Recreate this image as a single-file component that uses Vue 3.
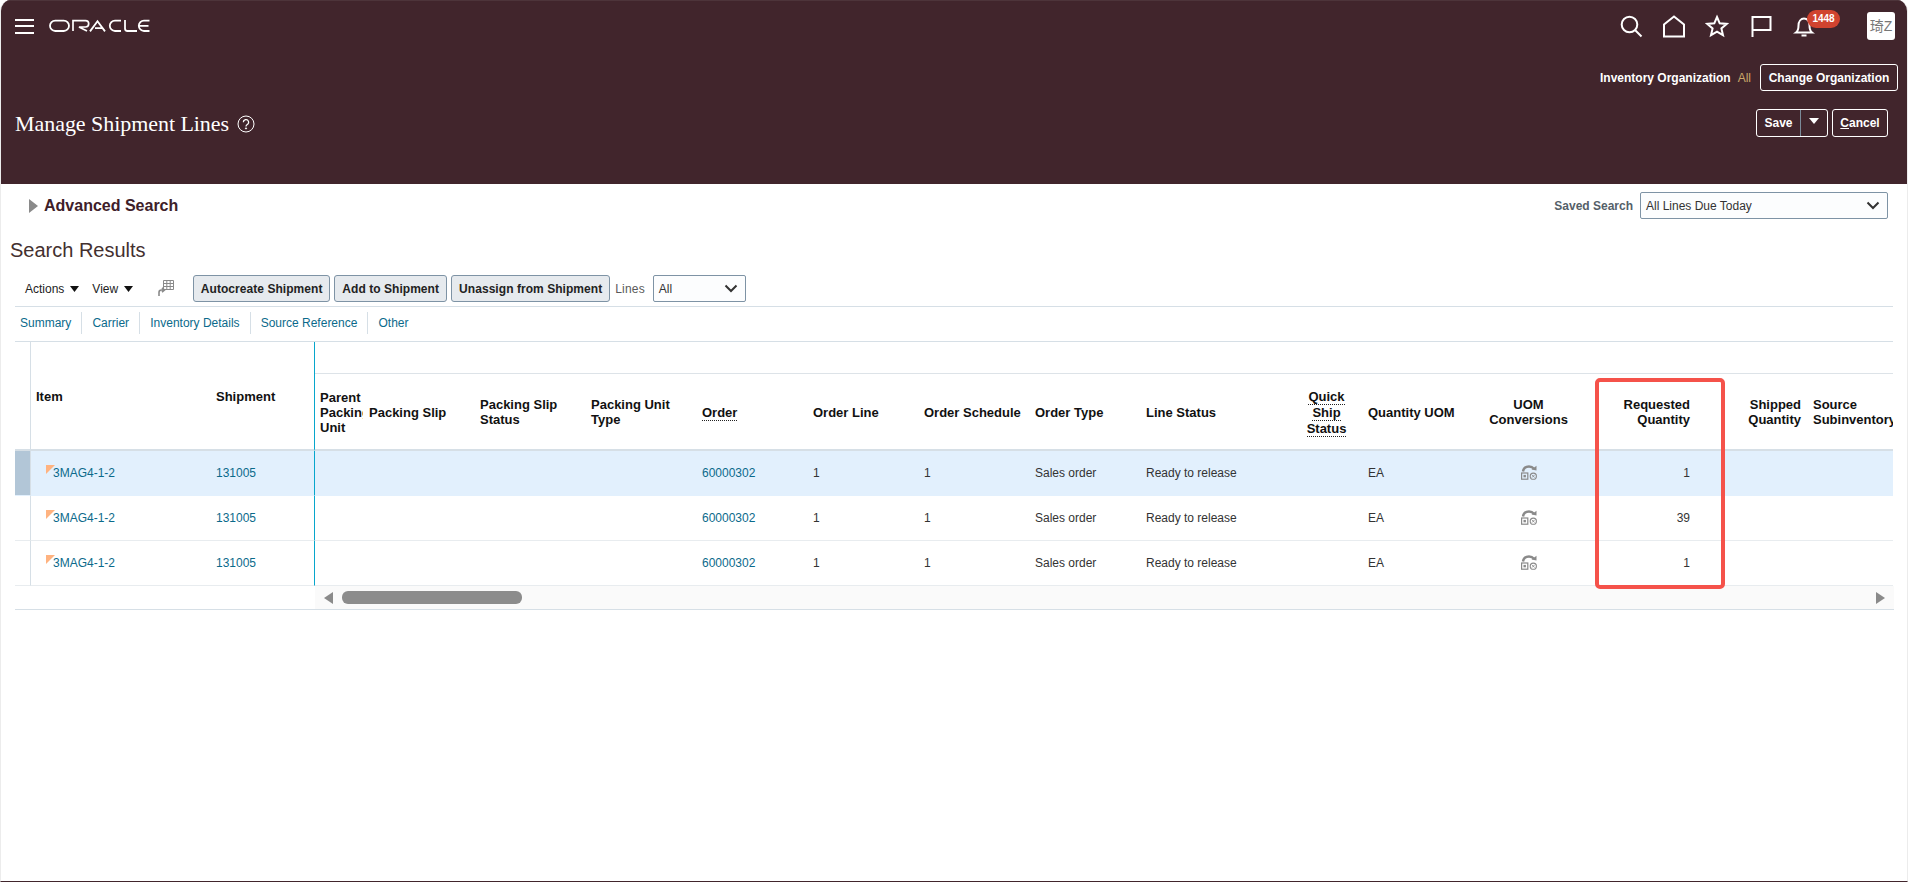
<script setup>
const rows = [
  { qty: '1', selected: true },
  { qty: '39', selected: false },
  { qty: '1', selected: false },
]
const tabs = ['Summary', 'Carrier', 'Inventory Details', 'Source Reference', 'Other']
const widths = [16, 178, 106, 48, 111, 111, 111, 111, 111, 111, 111, 151, 71, 111, 111, 111, 111, 111]
</script>

<template>
  <div class="page">
    <header class="hero">
      <div class="topbar">
        <button class="burger" aria-label="Menu"><i></i><i></i><i></i></button>
        <svg class="logo" viewBox="0 0 101 14" fill="none" stroke="#fff" stroke-width="1.8">
          <rect x="1" y="1.6" width="19" height="10.4" rx="5.2" />
          <path d="M24 12V1.6h12.5a3 3 0 0 1 0 6.4H30l8 4" stroke-width="1.7" />
          <path d="M41 12.4 48.5 2.2 56 12.4M46 9.2h7" />
          <path d="M72 1.6h-6a5.2 5.2 0 0 0 0 10.4h6" />
          <path d="M76 1v8.5a2.5 2.5 0 0 0 2.5 2.5H88" />
          <path d="M100.5 1.6H95a5.2 5.2 0 0 0 0 10.4h5.5M90.5 6.8h9" />
        </svg>
        <div class="spacer"></div>
        <div class="ico">
          <svg class="search-ico" width="24" height="24" viewBox="0 0 24 24" fill="none" stroke="#fff" stroke-width="2"><circle cx="10.5" cy="10.5" r="7.8" /><path d="m16 16 6.5 6.5" /></svg>
        </div>
        <div class="ico">
          <svg width="24" height="24" viewBox="0 0 24 24" fill="none" stroke="#fff" stroke-width="2"><path d="M2 22.500V10.500L12 2.500l10 8v12z" /></svg>
        </div>
        <div class="ico">
          <svg width="24" height="24" viewBox="0 0 24 24" fill="none" stroke="#fff" stroke-width="2"><path d="m12 3 2.700 6.300 7 .6-5.300 4.500 1.600 6.800L12 17.600l-6 3.600 1.600-6.800L2.300 9.900l7-.6z" /></svg>
        </div>
        <div class="ico">
          <svg width="24" height="24" viewBox="0 0 24 24" fill="none" stroke="#fff" stroke-width="2"><path d="M3.500 23V3h18v13h-18" /></svg>
        </div>
        <div class="ico bell">
          <svg width="24" height="24" viewBox="0 0 24 24" fill="none" stroke="#fff" stroke-width="2"><path d="M4 18.500c2-1.500 2.500-3.500 2.500-7 0-4 2.300-7 5.500-7s5.500 3 5.500 7c0 3.500.5 5.500 2.500 7zM9.500 21.500h5" /></svg>
          <span class="badge">1448</span>
        </div>
        <div class="avatar">琦Z</div>
      </div>
      <div class="org">
        <span class="org-label">Inventory Organization</span>
        <span class="org-value">All</span>
        <button class="ghost org-btn">Change Organization</button>
      </div>
      <div class="title-row">
        <h1>Manage Shipment Lines</h1>
        <svg class="help" width="18" height="18" viewBox="0 0 18 18" fill="none" stroke="#fff" stroke-width="1"><circle cx="9" cy="9" r="8" /><path d="M6.400 7.200a2.600 2.600 0 1 1 3.900 2.200c-.9.500-1.300 1-1.300 2" stroke-width="1.200" /><circle cx="9" cy="13.400" r=".6" fill="#fff" /></svg>
        <div class="spacer"></div>
        <div class="ghost save">
          <span class="save-text">Save</span>
          <span class="save-caret"><svg width="10" height="6" viewBox="0 0 10 6"><path d="M0 0h10L5 6z" fill="#fff" /></svg></span>
        </div>
        <button class="ghost cancel"><u>C</u>ancel</button>
      </div>
    </header>

    <section class="search-row">
      <svg class="disclose" width="9" height="14" viewBox="0 0 9 14"><path d="M0 0l9 7-9 7z" fill="#8a8a8a" /></svg>
      <h2>Advanced Search</h2>
      <div class="spacer"></div>
      <span class="saved-label">Saved Search</span>
      <div class="select saved"><span>All Lines Due Today</span>
        <svg width="14" height="9" viewBox="0 0 14 9" fill="none" stroke="#333" stroke-width="2"><path d="m1.500 1.500 5.500 5.500 5.500-5.500" /></svg>
      </div>
    </section>

    <h3 class="results">Search Results</h3>

    <div class="toolbar">
      <span class="menu">Actions <svg width="9" height="6" viewBox="0 0 9 6"><path d="M0 0h9L4.500 6z" fill="#111" /></svg></span>
      <span class="menu view">View <svg width="9" height="6" viewBox="0 0 9 6"><path d="M0 0h9L4.500 6z" fill="#111" /></svg></span>
      <svg class="grid-ico" width="16" height="17" viewBox="0 0 16 17" fill="none" stroke="#8a8a8a" stroke-width="1">
        <path d="M5.500.5h10v9h-10zM5.500 3.500h10M5.500 6.500h10M8.800.5v9M12.200.5v9" />
        <path d="M1 16v-3.500c0-1.500 1-2.500 2.500-2.500H6M4 7.800 6.500 10 4 12.200" stroke-width="1.600" />
      </svg>
      <button class="cmd c1">Autocreate Shipment</button>
      <button class="cmd c2">Add to Shipment</button>
      <button class="cmd c3">Unassign from Shipment</button>
      <span class="lines-label">Lines</span>
      <div class="select lines"><span>All</span>
        <svg width="14" height="9" viewBox="0 0 14 9" fill="none" stroke="#333" stroke-width="2"><path d="m1.500 1.500 5.500 5.500 5.500-5.500" /></svg>
      </div>
    </div>

    <nav class="tabs">
      <a v-for="t in tabs" :key="t">{{ t }}</a>
    </nav>

    <div class="grid-wrap">
      <div class="table-clip">
        <table>
          <colgroup>
            <col v-for="(w, i) in widths" :key="i" :style="{ width: w + 'px' }" />
          </colgroup>
          <thead>
            <tr class="band">
              <th rowspan="2" class="sel-h"></th>
              <th rowspan="2" class="lead first">Item</th>
              <th rowspan="2" class="lead frozen">Shipment</th>
              <th colspan="15" class="band-cell"></th>
            </tr>
            <tr class="heads">
              <th class="clip">Parent<br />Packing<br />Unit</th>
              <th>Packing Slip</th>
              <th class="two">Packing Slip<br />Status</th>
              <th class="two">Packing Unit<br />Type</th>
              <th><span class="dot">Order</span></th>
              <th>Order Line</th>
              <th>Order Schedule</th>
              <th>Order Type</th>
              <th>Line Status</th>
              <th class="ctr"><span class="dot">Quick</span><br /><span class="dot">Ship</span><br /><span class="dot">Status</span></th>
              <th>Quantity UOM</th>
              <th class="ctr two">UOM<br />Conversions</th>
              <th class="end two">Requested<br />Quantity</th>
              <th class="end two">Shipped<br />Quantity</th>
              <th class="src two">Source<br />Subinventory</th>
            </tr>
          </thead>
          <tbody>
            <tr v-for="(r, i) in rows" :key="i" :class="{ selected: r.selected }">
              <td class="sel"></td>
              <td class="item"><a class="item-link"><i class="flag-mark"></i>3MAG4-1-2</a></td>
              <td class="frozen ship"><a>131005</a></td>
              <td></td>
              <td></td>
              <td></td>
              <td></td>
              <td><a>60000302</a></td>
              <td>1</td>
              <td>1</td>
              <td>Sales order</td>
              <td>Ready to release</td>
              <td></td>
              <td>EA</td>
              <td class="ctr">
                <svg class="uom" width="16" height="15" viewBox="0 0 16 15" fill="none" stroke="#8a8a8a">
                  <path d="M2 6.500C2.500 3 5 1.500 8 1.500c2.200 0 3.800.8 5 2.200" stroke-width="2.400" />
                  <path d="m10.500 4.600 5 1V.8z" fill="#8a8a8a" stroke="none" />
                  <rect x=".6" y="8" width="6.200" height="6.200" stroke-width="1.200" />
                  <rect x="2.500" y="9.900" width="2.400" height="2.400" fill="#8a8a8a" stroke="none" />
                  <circle cx="12.300" cy="11.200" r="3.100" stroke-width="1.100" />
                  <path d="m11 9.900 2.600 2.600M13.600 9.900 11 12.500" stroke-width=".9" />
                </svg>
              </td>
              <td class="end">{{ r.qty }}</td>
              <td></td>
              <td></td>
            </tr>
          </tbody>
        </table>
        <div class="req-mark"></div>
      </div>
      <div class="hscroll">
        <div class="hscroll-lead"></div>
        <div class="hscroll-track">
          <svg width="9" height="12" viewBox="0 0 9 12"><path d="M9 0v12L0 6z" fill="#8a8a8a" /></svg>
          <div class="thumb"></div>
          <div class="spacer"></div>
          <svg width="9" height="12" viewBox="0 0 9 12"><path d="M0 0v12l9-6z" fill="#8a8a8a" /></svg>
        </div>
      </div>
    </div>
  </div>
</template>

<style>
html, body { margin: 0; background: #fff; }
</style>

<style scoped>
.page { box-sizing: border-box; width: 1908px; height: 882px; overflow: hidden; position: relative; background: #fff; border: 1px solid #ececec; border-bottom-color: #41252c; border-top: 0; border-radius: 11px 11px 0 0; font-family: "Liberation Sans", Arial, sans-serif; font-size: 12px; color: #333; }
.spacer { flex: 1; }
a { color: #0b6a8b; text-decoration: none; }
button { font-family: inherit; margin: 0; cursor: pointer; }

.hero { height: 184px; background: #41252c; box-sizing: border-box; padding-top: 1px; border-top: 1px solid #4d343a; margin-left: -1px; margin-right: -1px; }
.topbar { display: flex; align-items: center; height: 48px; padding: 0 13px 0 15px; }
.burger { background: none; border: 0; padding: 0; width: 19px; height: 15px; display: flex; flex-direction: column; justify-content: space-between; margin-right: 15px; }
.burger i { display: block; height: 2px; width: 19px; background: #fff; }
.logo { width: 101px; height: 14px; }
.ico { width: 43.500px; height: 24px; display: flex; justify-content: center; align-items: center; position: relative; }
.search-ico { margin-left: 2px; }
.bell { margin-right: 41px; }
.badge { position: absolute; left: 24.500px; top: -4px; width: 33px; height: 18px; border-radius: 9px; background: #d0432f; color: #fff; font-size: 10px; font-weight: 700; line-height: 18px; text-align: center; }
.avatar { width: 28px; height: 28px; background: #fff; border-radius: 3px; color: #777; font-size: 14px; line-height: 28px; text-align: center; font-family: "Liberation Sans", "Noto Sans CJK SC", sans-serif; }

.org { display: flex; align-items: center; justify-content: flex-end; height: 27px; margin-top: 14px; padding-right: 10px; color: #fff; font-size: 12px; }
.org-label { font-weight: 700; }
.org-value { color: #c9a86a; margin: 0 9px 0 7px; }
.ghost { box-sizing: border-box; background: transparent; border: 1px solid #fff; border-radius: 3px; color: #fff; font-size: 12px; font-weight: 700; }
.org-btn { width: 138px; height: 27px; padding: 0; }
.title-row { display: flex; align-items: center; height: 28px; margin-top: 18px; padding: 0 20px 0 15px; }
h1 { margin: 2px 0 0; font-family: "Liberation Serif", serif; font-weight: 400; font-size: 22px; letter-spacing: -.05px; color: #fff; }
.help { margin-left: 8px; margin-top: 2px; }
.save { width: 72px; height: 28px; display: flex; align-items: stretch; }
.save-text { width: 43px; display: flex; align-items: center; justify-content: center; border-right: 1px solid #7b8b99; }
.save-caret { flex: 1; display: flex; justify-content: center; padding-top: 8px; }
.cancel { width: 56px; height: 28px; margin-left: 4px; padding: 0; }

.search-row { display: flex; align-items: center; height: 44px; margin-left: 28px; padding-right: 19px; }
.disclose { margin-right: 6px; }
h2 { margin: 0; font-size: 16px; font-weight: 700; color: #3e2029; }
.saved-label { font-weight: 700; color: #555f69; margin-right: 7px; }
.select { box-sizing: border-box; height: 27px; display: flex; align-items: center; justify-content: space-between; background: #fcfdfe; border: 1px solid #7e93a5; border-radius: 2px; padding: 0 7px 0 5px; color: #333; }
.saved { width: 248px; margin-top: -1px; }
.results { margin: 0 0 0 9px; height: 46px; line-height: 44px; font-size: 20px; font-weight: 400; color: #43302f; }

.toolbar { display: flex; align-items: center; height: 29px; margin-left: 14px; margin-right: 14px; padding-left: 10px; padding-bottom: 3px; border-bottom: 1px solid #d6dfe6; }
.menu { color: #222; display: inline-flex; align-items: center; gap: 6px; }
.view { margin-left: 13px; }
.grid-ico { margin-left: 25px; margin-right: 19px; }
.cmd { box-sizing: border-box; height: 27px; background: #e6eaee; border: 1px solid #7e93a5; border-radius: 3px; padding: 0; font-size: 12px; font-weight: 700; color: #222; margin-right: 4px; letter-spacing: .05px; }
.c1 { width: 137px; }
.c2 { width: 113px; }
.c3 { width: 159px; margin-right: 5px; }
.lines-label { color: #5a5a5a; margin-right: 8px; letter-spacing: .2px; }
.lines { width: 93px; }

.tabs { display: flex; align-items: center; height: 32px; margin: 0 14px; padding-left: 5px; padding-bottom: 2px; border-bottom: 1px solid #d6dfe6; }
.tabs a { height: 22px; line-height: 22px; padding: 0 10px 0 10.100px; border-right: 1px solid #d6dfe6; white-space: nowrap; }
.tabs a:first-child { padding-left: 0; }
.tabs a:last-child { border-right: 0; }

.grid-wrap { margin: 0 14px; }
.table-clip { position: relative; width: 1879px; }
table { table-layout: fixed; width: 1902px; border-collapse: separate; border-spacing: 0; clip-path: inset(0 24px 0 0); }
th { font-size: 13px; font-weight: 700; color: #111; text-align: left; line-height: 15px; padding: 0 0 0 6px; vertical-align: middle; }
.band th { height: 32px; }
.band-cell { border-bottom: 1px solid #dde3e8; box-sizing: border-box; padding: 0; }
.heads th { height: 77px; box-sizing: border-box; border-bottom: 2px solid #d6dfe6; overflow: hidden; padding-top: 2px; }
.heads th.two { padding-top: 0; }
.sel-h { border-right: 1px solid #d6dfe6; border-bottom: 2px solid #d6dfe6; padding: 0; box-sizing: border-box; }
.lead { border-bottom: 2px solid #d6dfe6; box-sizing: border-box; padding-top: 2px; }
th.first { padding-left: 5px; }
.frozen { border-right: 1px solid #07a6cc !important; }
.heads .clip { white-space: nowrap; padding-left: 5px; }
.dot { border-bottom: 1px dotted #222; display: inline-block; line-height: 14px; }
.heads .ctr { text-align: center; padding-left: 0; }
th.end, td.end { text-align: right; padding-right: 5px; padding-left: 0; }
.heads .src { white-space: nowrap; padding-left: 7px; }
td { height: 45px; box-sizing: border-box; padding: 0 0 0 6px; border-bottom: 1px solid #e8ecef; color: #333; font-size: 12px; white-space: nowrap; overflow: hidden; vertical-align: middle; }
td.ctr { padding-left: 0; text-align: center; }
.uom { vertical-align: middle; margin-top: -2px; }
td.sel { padding: 0; border-right: 1px solid #d6dfe6; }
td.item { padding-left: 15px; }
td.ship { padding-left: 7px; }
.lead.frozen { padding-left: 7px; }
.item-link { position: relative; padding-left: 7px; display: inline-block; line-height: 16px; }
.flag-mark { position: absolute; left: 0; top: 0; width: 9px; height: 9px; background: #ffb380; clip-path: polygon(0 0, 100% 0, 0 100%); }
tr.selected td { background: #e2f0fd; border-bottom-color: #e2f0fd; }
tr.selected td.sel { background: #b2c6d7; }
.req-mark { position: absolute; left: 1580px; top: 36px; width: 130px; height: 211px; box-sizing: border-box; border: 4px solid #f5524a; border-radius: 5px; pointer-events: none; }
.hscroll { display: flex; height: 24px; box-sizing: border-box; border-bottom: 1px solid #d6dfe6; width: 1879px; }
.hscroll-lead { width: 300px; }
.hscroll-track { flex: 1; display: flex; align-items: center; background: #fafafa; padding: 0 9px 0 9px; }
.thumb { width: 180px; height: 13px; border-radius: 6px; background: #8c8c8c; margin-left: 9px; }
</style>
